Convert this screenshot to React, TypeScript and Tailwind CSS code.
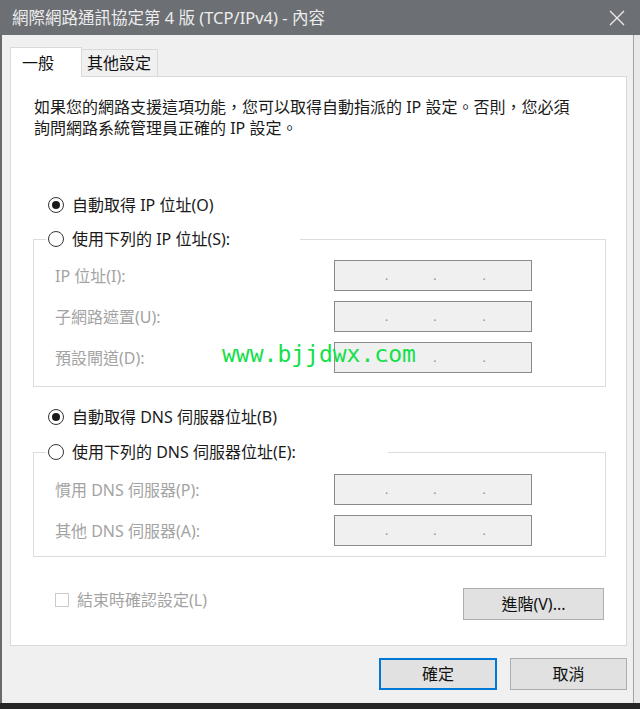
import React from "react";

const FONT = "font-['Noto_Sans','Noto_Sans_CJK_TC',sans-serif]";

function Radio({ checked, label }: { checked?: boolean; label: string }) {
  return (
    <div className="flex items-center h-[22px] bg-white">
      <span className="w-[16px] h-[16px] rounded-full border border-[#333333] bg-white flex items-center justify-center">
        {checked && <span className="w-[8px] h-[8px] rounded-full bg-[#1a1a1a]" />}
      </span>
      <span className="ml-[8px] text-[16px] leading-[22px] text-[#1a1a1a] whitespace-nowrap">{label}</span>
    </div>
  );
}

function IpRow({ label }: { label: string }) {
  return (
    <div className="flex items-center h-[31px]">
      <span className="w-[279px] text-[16px] leading-[22px] text-[#a3a3a3] whitespace-nowrap">{label}</span>
      <div className="w-[198px] h-[31px] border border-[#8a8a8a] bg-[#f0f0f0] flex items-end pb-[8px] text-[12px] leading-[12px] text-[#8f8f8f]">
        <span className="ml-[50px]">.</span>
        <span className="ml-[45px]">.</span>
        <span className="ml-[46px]">.</span>
      </div>
    </div>
  );
}

export default function App() {
  return (
    <div className={`relative w-[640px] h-[709px] bg-[#e9e9e9] flex flex-col ${FONT}`}>
      {/* Title bar */}
      <div className="h-[35px] bg-[#6c6f73] flex items-center justify-between pl-[12px] pr-[15px]">
        <span className="text-[16.5px] leading-[20px] text-[#ededed] whitespace-nowrap">
          網際網路通訊協定第 4 版 (TCP/IPv4) - 內容
        </span>
        <svg width="16" height="16" viewBox="0 0 16 16" className="text-[#ededed]">
          <path d="M1 1 L15 15 M15 1 L1 15" stroke="currentColor" strokeWidth="1.3" fill="none" />
        </svg>
      </div>

      {/* Body */}
      <div className="h-[668px] w-[634px] bg-[#f0f0f0] border-l-2 border-r border-l-[#6a6a6a] border-r-[#a5a5a5] pl-[8px] pt-[12px] flex flex-col">
        {/* Tabs */}
        <div className="flex items-end h-[30px]">
          <div className="relative z-10 w-[72px] h-[30px] bg-white border border-b-0 border-[#d9d9d9] pl-[11px] flex items-center text-[16px] leading-[22px] text-[#111]">
            一般
          </div>
          <div className="w-[76px] h-[28px] bg-[#f0f0f0] border border-l-0 border-[#d9d9d9] pl-[5px] flex items-center text-[16px] leading-[22px] text-[#111]">
            其他設定
          </div>
        </div>

        {/* Panel */}
        <div className="-mt-px w-[617px] h-[570px] bg-white border border-[#d9d9d9] flex flex-col">
          <p className="mt-[20px] ml-[23px] text-[16px] leading-[21px] text-[#1a1a1a] whitespace-nowrap">
            如果您的網路支援這項功能，您可以取得自動指派的 IP 設定。否則，您必須
            <br />
            詢問網路系統管理員正確的 IP 設定。
          </p>

          <div className="mt-[55px] ml-[37px]">
            <Radio checked label="自動取得 IP 位址(O)" />
          </div>

          <fieldset className="mt-[12px] ml-[22px] w-[573px] border border-[#dcdcdc] p-0 m-0 min-w-0">
            <legend className="ml-[12px] w-[254px] pl-[2px] p-0">
              <Radio label="使用下列的 IP 位址(S):" />
            </legend>
            <div className="pl-[21px] pt-[10px] pb-[13px] flex flex-col gap-[10px]">
              <IpRow label="IP 位址(I):" />
              <IpRow label="子網路遮置(U):" />
              <IpRow label="預設閘道(D):" />
            </div>
          </fieldset>

          <div className="mt-[19px] ml-[37px]">
            <Radio checked label="自動取得 DNS 伺服器位址(B)" />
          </div>

          <fieldset className="mt-[13px] ml-[22px] w-[573px] border border-[#dcdcdc] p-0 m-0 min-w-0">
            <legend className="ml-[12px] w-[342px] pl-[2px] p-0">
              <Radio label="使用下列的 DNS 伺服器位址(E):" />
            </legend>
            <div className="pl-[21px] pt-[11px] pb-[10px] flex flex-col gap-[10px]">
              <IpRow label="慣用 DNS 伺服器(P):" />
              <IpRow label="其他 DNS 伺服器(A):" />
            </div>
          </fieldset>

          <div className="mt-[31px] ml-[44px] w-[549px] h-[32px] flex items-start justify-between">
            <div className="flex items-center h-[22px] mt-[1px]">
              <span className="w-[14px] h-[14px] border border-[#cccccc] bg-white" />
              <span className="ml-[8px] text-[16px] leading-[22px] text-[#a3a3a3] whitespace-nowrap">結束時確認設定(L)</span>
            </div>
            <button className="w-[141px] h-[32px] bg-[#e1e1e1] border border-[#adadad] text-[16px] leading-[22px] text-[#111]">
              進階(V)...
            </button>
          </div>
        </div>

        {/* Footer */}
        <div className="mt-[12px] w-[617px] flex justify-end gap-[13px]">
          <button className="w-[118px] h-[32px] bg-[#e1e1e1] border-2 border-[#0078d7] text-[16px] leading-[22px] text-[#111]">
            確定
          </button>
          <button className="w-[117px] h-[32px] bg-[#e1e1e1] border border-[#adadad] text-[16px] leading-[22px] text-[#111]">
            取消
          </button>
        </div>
      </div>

      {/* Bottom frame */}
      <div className="h-[6px] bg-[#262626]" />

      {/* Watermark */}
      <div className="absolute left-[222px] top-[343px] text-[23px] leading-[23px] text-[#14e04a] font-['DejaVu_Sans_Mono',monospace] whitespace-nowrap pointer-events-none">
        www.bjjdwx.com
      </div>
    </div>
  );
}
